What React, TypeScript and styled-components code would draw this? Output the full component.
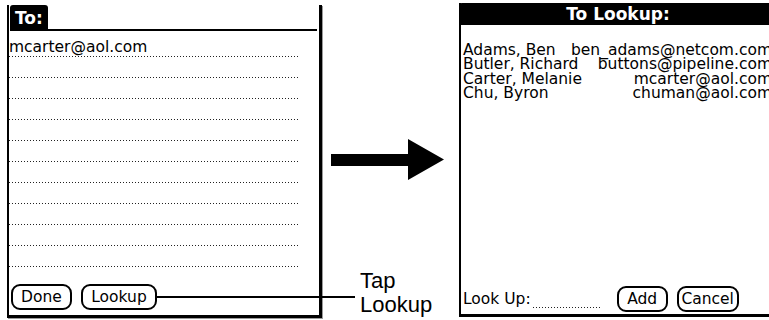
import React from "react";
import styled, { createGlobalStyle } from "styled-components";

const Global = createGlobalStyle`
  html, body { margin: 0; padding: 0; background: #fff; }
  body { width: 769px; height: 320px; overflow: hidden; }
`;

const Page = styled.div`
  position: relative;
  width: 769px;
  height: 320px;
  overflow: hidden;
  display: flex;
  align-items: flex-start;
  font-family: "DejaVu Sans", sans-serif;
  color: #000;
`;

const Screen = styled.div<{ $top: number; $left: number; $width: number; $height: number }>`
  flex: none;
  box-sizing: border-box;
  margin: ${(p) => p.$top}px 0 0 ${(p) => p.$left}px;
  width: ${(p) => p.$width}px;
  height: ${(p) => p.$height}px;
  display: flex;
  flex-direction: column;
  border-left: 2px solid #000;
  border-bottom: 3px solid #000;
`;

const LeftScreen = styled(Screen)`
  border-right: 3px solid #000;
  box-shadow: 1px 1px 0 #9a9a9a;
`;

const HeaderRow = styled.div`
  display: flex;
  align-items: flex-end;
  height: 26px;
`;

const ToLabel = styled.div`
  background: #000;
  color: #fff;
  font-weight: bold;
  font-size: 17px;
  height: 26px;
  line-height: 27px;
  padding: 0 5px;
  margin-left: 1px;
  border-radius: 3px 3px 0 0;
`;

const HeaderRule = styled.div`
  flex: 1;
  height: 2px;
  margin: 0 2px 0 0;
  background: #000;
`;

const Lines = styled.div`
  margin: 5px 19px 0 0;
  display: flex;
  flex-direction: column;
`;

const Line = styled.div`
  box-sizing: border-box;
  height: 21px;
  padding-top: 1px;
  line-height: 20px;
  font-size: 15.5px;
  background-image: repeating-linear-gradient(to right, #222 0 1px, transparent 1px 3px);
  background-size: 100% 1px;
  background-position: left bottom;
  background-repeat: no-repeat;
`;

const ButtonBar = styled.div`
  margin-top: auto;
  display: flex;
  align-items: flex-end;
  gap: 9px;
  padding: 0 0 5px 2px;
`;

const PalmButton = styled.div<{ $w: number }>`
  box-sizing: border-box;
  width: ${(p) => p.$w}px;
  height: 26px;
  border: 2px solid #000;
  border-radius: 9px;
  font-size: 15.5px;
  line-height: 22px;
  text-align: center;
  white-space: nowrap;
`;

const Middle = styled.div`
  flex: none;
  width: 137px;
  height: 320px;
  display: flex;
  flex-direction: column;
`;

const ArrowSvg = styled.svg`
  display: block;
  margin: 139px 0 0 9px;
`;

const Callout = styled.div`
  margin: auto 0 0 38px;
  padding-bottom: 3px;
  font-family: "Liberation Sans", Arial, sans-serif;
  font-size: 22px;
  line-height: 24px;
`;

const CalloutLine = styled.div`
  position: absolute;
  left: 157px;
  top: 296px;
  width: 198px;
  height: 2px;
  background: #000;
`;

const TitleBar = styled.div`
  margin-left: -2px;
  height: 22px;
  background: #000;
  color: #fff;
  font-weight: bold;
  font-size: 17px;
  line-height: 23px;
  text-align: center;
  border-radius: 3px 3px 0 0;
`;

const List = styled.div`
  padding: 17.5px 5px 0 2px;
  display: flex;
  flex-direction: column;
`;

const Entry = styled.div`
  display: flex;
  justify-content: space-between;
  font-size: 15.5px;
  line-height: 14.6px;
  white-space: nowrap;
`;

const BottomRow = styled.div`
  margin-top: auto;
  display: flex;
  align-items: flex-end;
  padding: 0 0 2px 2px;
  font-size: 15.5px;
`;

const LookLabel = styled.span`
  line-height: 22px;
  margin-bottom: 2px;
`;

const Field = styled.span`
  width: 69px;
  height: 20px;
  margin: 0 15px 4px 2px;
  background-image: repeating-linear-gradient(to right, #222 0 1px, transparent 1px 3px);
  background-size: 100% 1px;
  background-position: left bottom;
  background-repeat: no-repeat;
`;

const RightButtons = styled.div`
  display: flex;
  gap: 9px;
`;

const entries = [
  ["Adams, Ben", "ben_adams@netcom.com"],
  ["Butler, Richard", "buttons@pipeline.com"],
  ["Carter, Melanie", "mcarter@aol.com"],
  ["Chu, Byron", "chuman@aol.com"],
];

export default function App() {
  const lines = ["mcarter@aol.com", "", "", "", "", "", "", "", "", "", ""];
  return (
    <Page>
      <Global />
      <LeftScreen $top={5} $left={7} $width={315} $height={313}>
        <HeaderRow>
          <ToLabel>To:</ToLabel>
          <HeaderRule />
        </HeaderRow>
        <Lines>
          {lines.map((t, i) => (
            <Line key={i}>{t}</Line>
          ))}
        </Lines>
        <ButtonBar>
          <PalmButton $w={61}>Done</PalmButton>
          <PalmButton $w={76}>Lookup</PalmButton>
        </ButtonBar>
      </LeftScreen>
      <Middle>
        <ArrowSvg width="113" height="41" viewBox="0 0 113 41">
          <polygon points="0,15 77,15 77,0 113,20.5 77,41 77,27 0,27" fill="#000" />
        </ArrowSvg>
        <Callout>
          Tap
          <br />
          Lookup
        </Callout>
      </Middle>
      <Screen $top={3} $left={0} $width={318} $height={314}>
        <TitleBar>To Lookup:</TitleBar>
        <List>
          {entries.map(([n, e]) => (
            <Entry key={n}>
              <span>{n}</span>
              <span>{e}</span>
            </Entry>
          ))}
        </List>
        <BottomRow>
          <LookLabel>Look Up:</LookLabel>
          <Field />
          <RightButtons>
            <PalmButton $w={51}>Add</PalmButton>
            <PalmButton $w={62}>Cancel</PalmButton>
          </RightButtons>
        </BottomRow>
      </Screen>
      <CalloutLine />
    </Page>
  );
}
